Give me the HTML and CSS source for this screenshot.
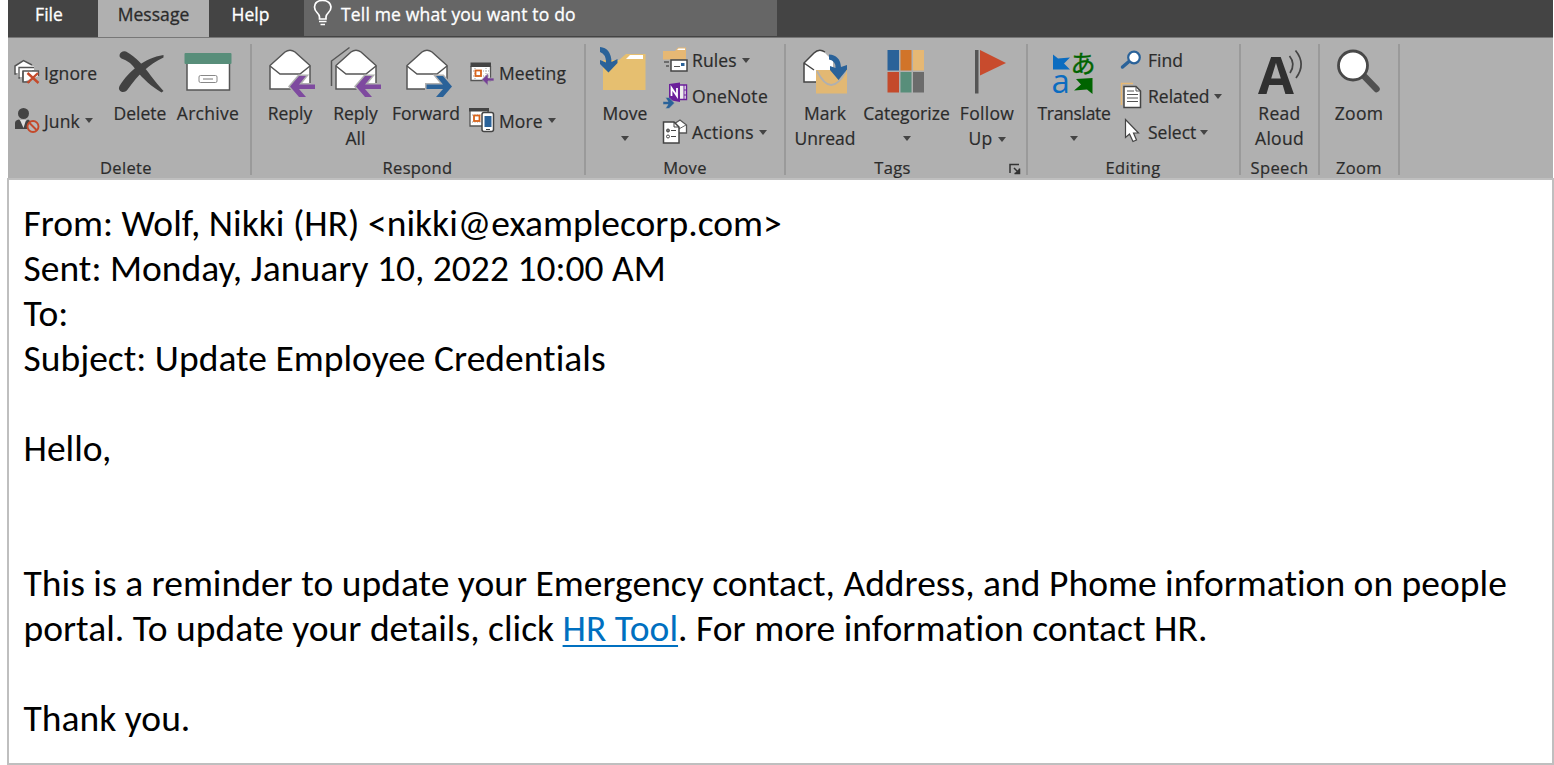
FILE: index.html
```html
<!DOCTYPE html>
<html lang="en">
<head>
<meta charset="utf-8">
<title>Update Employee Credentials - Message</title>
<link rel="stylesheet" href="styles.css">
</head>
<body>
<svg class="defs" width="0" height="0">
  <defs>
    <g id="envelope">
      <path d="M271 89V65.500L286 52Q291 48.500 296 52L311 65.500V89Z" fill="#fff" stroke="#555" stroke-width="1.500"/>
      <path d="M271 66L281 74H301L311 66" fill="none" stroke="#555" stroke-width="1.500"/>
    </g>
    <path id="arrow-left" d="M291 86.500L300 76H307L300 84.500H316V89H300L307 97H300Z"/>
    <path id="arrow-right" d="M316 86.500L307 76H300L307 84.500H290.500V89H307L300 97H307Z"/>
  </defs>
</svg>
<nav class="tabs">
  <span class="tab file">File</span>
  <span class="tab active">Message</span>
  <span class="tab help">Help</span>
  <div class="tell">
    <svg class="bulb" viewBox="312 0 22 27"><path d="M319.500 19V17Q319.500 15 317 12.500Q314.500 10 314.500 7Q315 0.500 322.500 0.500T331 7Q331 10 328.500 12.500Q326 15 326 17V19ZM319 21.500H326.500M320.500 24.500H325" fill="none" stroke="#fff" stroke-width="1.700"/></svg>
    <span>Tell me what you want to do</span>
  </div>
</nav>
<main class="ribbon">
  <section class="group g-delete">
    <div class="tools">
      <div class="stack two">
        <div class="small"><svg viewBox="13 58 28 28"><path d="M15 73V66L23.500 60.500L32 65V73Z" fill="#fff"/><path d="M16.500 74H15V66L23.500 60.500L32 65" fill="none" stroke="#555" stroke-width="1.500"/><path d="M18 66H34V70H22V77H18Z" fill="#fff"/><path d="M20 78H19V67.500H34" fill="none" stroke="#555" stroke-width="1.300"/><path d="M23 82V71H38.500V76" fill="#fff" stroke="#555" stroke-width="1.300"/><path d="M23 71V82H30" fill="none" stroke="#555" stroke-width="1.300"/><path d="M27.500 73L38.500 83M38 73L27.500 83" stroke="#c44a2b" stroke-width="2.400"/></svg><span>Ignore</span></div>
        <div class="small"><svg viewBox="13 106 28 28"><circle cx="23.500" cy="113.500" r="5.500" fill="#444"/><path d="M15 129V123Q15 120 19 119.500L23 123L28 119.500Q31 121 31 124L27 129Z" fill="#444"/><path d="M20 120L23.500 128L26 120Z" fill="#ddd"/><circle cx="33" cy="126.500" r="5.500" fill="#b8b8b8" stroke="#c44a2b" stroke-width="1.900"/><path d="M29.500 123L36.500 130" stroke="#c44a2b" stroke-width="1.900"/></svg><span>Junk</span><i class="caret"></i></div>
      </div>
      <div class="big w68"><svg viewBox="110 46 60 52"><path d="M119.500 55Q121 50.500 126 51.500C136 57 144 66 151 76Q157 84 163.500 91L161.500 92.500C151 86 143 79 136 70Q130 61 121.500 58.500Q119 57 119.500 55ZM163.500 55V57.500C149 64 138 75 128 89Q126 92.500 122 92Q117.500 90 119.500 86C129 71 144 58 163.500 55Z" fill="#424242"/></svg><span>Delete</span></div>
      <div class="big w68"><svg viewBox="178 46 60 52"><path d="M187 62V90H229.500V62" fill="#fff" stroke="#555" stroke-width="1.500"/><rect x="184.500" y="53" width="47" height="11" rx="1" fill="#588e7a"/><rect x="199" y="75.500" width="18" height="7" rx="1.500" fill="#fff" stroke="#888"/><path d="M203 79H213" stroke="#777"/></svg><span class="wide">Archive</span></div>
    </div>
    <div class="label">Delete</div>
  </section>
  <section class="group g-respond">
    <div class="tools">
      <div class="big w64"><svg viewBox="261 46 60 52"><use href="#envelope"/><use href="#arrow-left" fill="#7e4a9f" stroke="#b0b0b0" stroke-width="3"/><use href="#arrow-left" fill="#7e4a9f"/></svg><span>Reply</span></div>
      <div class="big w67"><svg viewBox="326.500 46 60 52"><path d="M332 86V61L350 47.500" fill="none" stroke="#555" stroke-width="1.500"/><g transform="translate(65.500)"><use href="#envelope"/><use href="#arrow-left" fill="#7e4a9f" stroke="#b0b0b0" stroke-width="3"/><use href="#arrow-left" fill="#7e4a9f"/></g></svg><span>Reply<br>All</span></div>
      <div class="big w74"><svg viewBox="396 46 60 52"><g transform="translate(136)"><use href="#envelope"/><use href="#arrow-right" fill="#2a6299" stroke="#b0b0b0" stroke-width="3"/><use href="#arrow-right" fill="#2a6299"/></g></svg><span>Forward</span></div>
      <div class="stack two">
        <div class="small"><svg viewBox="468 58 28 28"><path d="M471 66V80.500H490.500V66" fill="#fff" stroke="#555" stroke-width="1.300"/><path d="M473 71H489M473 76H489M475 68V80M486 68V80" stroke="#999" stroke-dasharray="1 1.500"/><rect x="470.500" y="62.500" width="20.500" height="4.500" fill="#444"/><rect x="475.500" y="70.500" width="5.500" height="5.500" fill="#fff" stroke="#d8641c" stroke-width="1.800"/><path d="M482 79.500L488 73.500V78H494V81H488V85.500Z" fill="#753f96" stroke="#b0b0b0" stroke-width=".7"/></svg><span>Meeting</span></div>
        <div class="small"><svg viewBox="468 106 28 28"><path d="M470 111V126H488V111" fill="#fff" stroke="#555" stroke-width="1.300"/><path d="M472 115H482M472 122H482" stroke="#999" stroke-dasharray="1 1.500"/><rect x="469" y="108" width="20" height="3.500" fill="#444"/><rect x="474" y="115.500" width="5.500" height="5.500" fill="#fff" stroke="#d8641c" stroke-width="1.800"/><rect x="482" y="112.500" width="11.500" height="19" rx="2" fill="#fff" stroke="#444" stroke-width="1.500"/><rect x="484.500" y="116" width="7" height="11" fill="#2a6299"/><path d="M486 129.500H490" stroke="#444"/></svg><span>More</span><i class="caret"></i></div>
      </div>
    </div>
    <div class="label">Respond</div>
  </section>
  <section class="group g-move">
    <div class="tools">
      <div class="big w64"><svg viewBox="595 46 60 52"><path d="M603 90V60H619L626 54H645.500V90Z" fill="#e6bf70"/><path d="M626 59L630 55H643V59Z" fill="#fff"/><path d="M600 47Q611 48 611.500 62L617.500 59V63L608.500 72.500L600 64V60L606 62.500Q606 54 600 52Z" fill="#2a6299"/></svg><span>Move</span><i class="caret"></i></div>
      <div class="stack three">
        <div class="small"><svg viewBox="661 46 28 28"><path d="M663 59.500V51H675L678 47.500H686V59.500Z" fill="#e6b874"/><path d="M677 50L678.500 48.500H685V50Z" fill="#fff"/><path d="M664 62H669M666 66H669" stroke="#555" stroke-width="1.500"/><rect x="671" y="60" width="16" height="11" fill="#fff" stroke="#444" stroke-width="1.500"/><path d="M674 66.500H680" stroke="#555"/><rect x="681" y="63" width="3.500" height="3" fill="#2a6299"/></svg><span>Rules</span><i class="caret"></i></div>
        <div class="small"><svg viewBox="661 82 28 28"><path d="M669 84L680 82.500V102L669 100Z" fill="#6b1f9a"/><path d="M680 85H686.500V99.500H680" fill="#eee" stroke="#6b1f9a" stroke-width="1.400"/><path d="M684 85V99M684 90H687M684 95H687" stroke="#6b1f9a"/><path d="M671.500 96V88L677 96V88" fill="none" stroke="#fff" stroke-width="1.800"/><path d="M663 101.500H668L665.500 97.500H669L674.500 103L669 108.500H665.500L668 104.500H663Z" fill="#2a6299" stroke="#b0b0b0" stroke-width=".5"/></svg><span class="wide">OneNote</span></div>
        <div class="small"><svg viewBox="661 118 28 28"><path d="M674 124L680 120L686.500 125V133H674Z" fill="#fff" stroke="#555" stroke-width="1.300"/><path d="M677 130L686 125" stroke="#666"/><path d="M663.500 122H674L679 127V143H663.500Z" fill="#fff" stroke="#444" stroke-width="1.500"/><path d="M674 122V127H679M671 130.500H676M671 136.500H676" fill="none" stroke="#444"/><circle cx="668" cy="130.500" r="1.500" fill="#777" stroke="#444"/><circle cx="668" cy="136.500" r="1.500" fill="#fff" stroke="#444"/></svg><span class="wide">Actions</span><i class="caret"></i></div>
      </div>
    </div>
    <div class="label">Move</div>
  </section>
  <section class="group g-tags">
    <div class="tools">
      <div class="big w68"><svg viewBox="795 46 60 52"><path d="M816 82H804V63L814 53Q819 48 825 53L833 61V72H816Z" fill="#fff"/><path d="M816 82H804V63L814 53Q819 48 825 52M804 63L814 70" fill="none" stroke="#444" stroke-width="1.500"/><rect x="816" y="70" width="31" height="23.500" fill="#e2b873"/><path d="M817 71Q831 99 846 71" fill="none" stroke="#b0b0b0" stroke-width="1.800"/><path d="M829 54.500Q840 55 841 67L847 65V69.500L838.500 80L830 70V66L835.500 68Q836 61 829 59.500Z" fill="#2a6299"/></svg><span>Mark<br>Unread</span></div>
      <div class="big w95"><svg viewBox="876.500 46 60 52"><path d="M887 50H898.500V70.500H887Z" fill="#2a6299"/><path d="M900 50H911V70.500H900Z" fill="#d17429"/><path d="M912.500 50H923.500V70.500H912.500Z" fill="#e6b874"/><path d="M887 72H898.500V92.500H887Z" fill="#c44a2b"/><path d="M900 72H911V92.500H900Z" fill="#588e7a"/><path d="M912.500 72H923.500V92.500H912.500Z" fill="#6b6b6b"/></svg><span>Categorize</span><i class="caret"></i></div>
      <div class="big w66"><svg viewBox="957 46 60 52"><rect x="975" y="50" width="3.500" height="43.500" fill="#555"/><path d="M980 50L1006 63L980 75.500Z" fill="#c84b2d"/></svg><span class="wide">Follow<br>Up<i class="caret inline"></i></span></div>
    </div>
    <div class="label">Tags<svg class="launcher" viewBox="0 0 12 12"><path d="M1 10V1.500H10M5 5L9 9M5.500 10.500H10.500V5.500" fill="none" stroke="#333" stroke-width="1.500"/><path d="M10.500 5.500V10.500H5.500Z" fill="#333"/></svg></div>
  </section>
  <section class="group g-editing">
    <div class="tools">
      <div class="big w80"><svg viewBox="1044 46 60 52"><path d="M1053 54.500L1058 58.500L1070 57.500L1064 63.500L1070 69.500H1053Z" fill="#0b6cc0"/><text x="1070.500" y="72.500" class="kana">あ</text><text x="1051.500" y="93" class="latin-a">a</text><path d="M1076 79L1092.500 78V94L1087 89.500L1074 90.500L1081 84.500Z" fill="#006400"/></svg><span class="narrow">Translate</span><i class="caret"></i></div>
      <div class="stack three">
        <div class="small"><svg viewBox="1119 46 28 28"><path d="M1129 61.500L1122.500 67" stroke="#2a6299" stroke-width="3.500" stroke-linecap="round"/><circle cx="1134" cy="57.500" r="5.800" fill="#fff" stroke="#2a6299" stroke-width="2.200"/></svg><span>Find</span></div>
        <div class="small"><svg viewBox="1119 82 28 28"><path d="M1121.500 105V83.500H1133" fill="none" stroke="#e6b874" stroke-width="1.500"/><path d="M1124 86.500H1136L1140.500 91V107.500H1124Z" fill="#fff" stroke="#444" stroke-width="1.500"/><path d="M1136 86.500V91H1140.500M1127 91H1134M1127 94.500H1138M1127 98H1138M1127 101.500H1138" fill="none" stroke="#555"/></svg><span>Related</span><i class="caret"></i></div>
        <div class="small"><svg viewBox="1119 118 28 28"><path d="M1125.500 119.500V137.500L1129.500 134L1133 141.500L1136.500 140L1133.500 133H1138.500Z" fill="#fff" stroke="#444" stroke-width="1.200"/></svg><span>Select</span><i class="caret"></i></div>
      </div>
    </div>
    <div class="label">Editing</div>
  </section>
  <section class="group g-speech">
    <div class="tools">
      <div class="big w78"><svg viewBox="1250 46 60 52"><text x="1258" y="93.500" class="speech-a">A</text><path d="M1289.500 56Q1296 64 1290 73M1295.500 50.500Q1306.500 64 1296 78" fill="none" stroke="#444" stroke-width="1.700"/></svg><span class="wide">Read<br>Aloud</span></div>
    </div>
    <div class="label">Speech</div>
  </section>
  <section class="group g-zoom">
    <div class="tools">
      <div class="big w78"><svg viewBox="1329 46 60 52"><path d="M1364 76L1376.500 89" stroke="#505050" stroke-width="6.500" stroke-linecap="round"/><circle cx="1353" cy="65.500" r="14.500" fill="#fff" stroke="#484848" stroke-width="2.800"/></svg><span class="wide">Zoom</span></div>
    </div>
    <div class="label">Zoom</div>
  </section>
</main>
<article class="mail">
  <p>From: Wolf, Nikki (HR) &lt;nikki@examplecorp.com&gt;</p>
  <p>Sent: Monday, January 10, 2022 10:00 AM</p>
  <p>To:</p>
  <p class="gap1">Subject: Update Employee Credentials</p>
  <p class="gap2">Hello,</p>
  <p>This is a reminder to update your Emergency contact, Address, and Phome information on people</p>
  <p class="gap1">portal. To update your details, click <a href="#">HR Tool</a>. For more information contact HR.</p>
  <p>Thank you.</p>
</article>
</body>
</html>
```
FILE: styles.css
```css
* { box-sizing: border-box; }
body {
  margin: 0;
  height: 765px;
  overflow: hidden;
  background: #fff;
  font-family: "Open Sans", "Noto Sans", sans-serif;
  color: #2b2b2b;
}
svg { overflow: visible; }
.defs { position: absolute; }
.tabs {
  display: flex;
  height: 37px;
  margin-left: 8px;
  margin-right: 1px;
  background: #444;
  color: #fff;
  font-size: 17.5px;
  line-height: 28px;
  letter-spacing: 0.05px;
  -webkit-text-stroke: 0.3px;
}
.tab { text-align: center; }
.file { width: 90px; padding-right: 8px; }
.active { width: 111px; background: #b0b0b0; color: #2b2b2b; }
.help { width: 95px; padding-right: 12px; }
.tell {
  display: flex;
  width: 473px;
  height: 36px;
  padding-left: 8px;
  gap: 7px;
  background: #666;
  letter-spacing: 0.17px;
}
.bulb { width: 22px; height: 27px; }
.ribbon {
  display: flex;
  height: 141px;
  margin-left: 8px;
  margin-right: 1px;
  padding-top: 6px;
  background: #b0b0b0;
  border-top: 1px solid #777;
}
.group {
  display: flex;
  flex-direction: column;
  height: 131px;
  border-right: 2px solid #9a9a9a;
  font-size: 17.5px;
  -webkit-text-stroke: 0.2px;
}
.g-delete { width: 244px; }
.g-respond { width: 334px; padding-left: 6px; }
.g-move { width: 200px; padding-left: 7px; }
.g-tags { width: 242px; padding-left: 5px; }
.g-editing { width: 213px; padding-left: 6px; }
.g-speech { width: 79px; }
.g-zoom { width: 80px; }
.tools { display: flex; height: 112px; padding-top: 1px; }
.big {
  display: flex;
  flex-direction: column;
  align-items: center;
  padding-top: 1px;
  text-align: center;
  line-height: 25px;
  white-space: nowrap;
}
.big > svg { width: 60px; height: 52px; margin-bottom: 3px; }
.wide { letter-spacing: 0.3px; }
.narrow { letter-spacing: -0.3px; }
.w64 { width: 64px; }
.w66 { width: 66px; }
.w67 { width: 67px; }
.w68 { width: 68px; }
.w74 { width: 74px; }
.w78 { width: 78px; }
.w80 { width: 80px; }
.w95 { width: 95px; }
.stack { display: flex; flex-direction: column; }
.two { width: 98px; padding: 13px 0 0 5px; gap: 20px; }
.three { padding: 1px 0 0 4px; gap: 8px; }
.g-editing .three { padding-left: 5px; }
.small { display: flex; align-items: center; height: 28px; gap: 3px; white-space: nowrap; letter-spacing: 0.1px; }
.g-editing .small { gap: 1px; letter-spacing: 0; }
.two span { padding-top: 2px; }
.small svg { width: 28px; height: 28px; flex: none; }
.caret {
  flex: none;
  border: 4.500px solid transparent;
  border-top: 5px solid #444;
  border-bottom: 0;
}
.small .caret { margin-left: 2px; }
.g-editing .small .caret { margin-left: 3px; }
.big > .caret { margin-top: 10px; }
.inline { display: inline-block; margin-left: 5px; vertical-align: 3px; }
.label {
  position: relative;
  height: 19px;
  line-height: 24px;
  font-size: 16.5px;
  letter-spacing: 0.35px;
  text-align: center;
}
.g-delete .label { padding-right: 6px; }
.g-respond .label, .g-move .label, .g-editing .label { padding-right: 7px; }
.g-tags .label { padding-right: 32px; }
.launcher { position: absolute; right: 5px; top: 7px; width: 12px; height: 12px; }
.kana { font: 25px "Noto Sans CJK JP", sans-serif; fill: #006400; stroke: #006400; stroke-width: .4px; }
.latin-a { font: 33px "Open Sans", sans-serif; fill: #0b6cc0; }
.speech-a { font: bold 52px "Open Sans", sans-serif; fill: #303030; }
.mail {
  height: 587px;
  margin-left: 7px;
  padding: 21px 0 0 14.5px;
  border: 2px solid #bfbfbf;
  font-family: Carlito, Calibri, Lato, sans-serif;
  font-size: 37.5px;
  font-variant-ligatures: none;
  letter-spacing: 0.02px;
  line-height: 45px;
  color: #000;
}
.mail p { margin: 0; white-space: nowrap; width: max-content; }
.mail .gap1 { margin-bottom: 45px; }
.mail .gap2 { margin-bottom: 90px; }
.mail a {
  color: #0070c0;
  text-decoration: underline;
  text-decoration-thickness: 2px;
  text-underline-offset: 4px;
}
```
